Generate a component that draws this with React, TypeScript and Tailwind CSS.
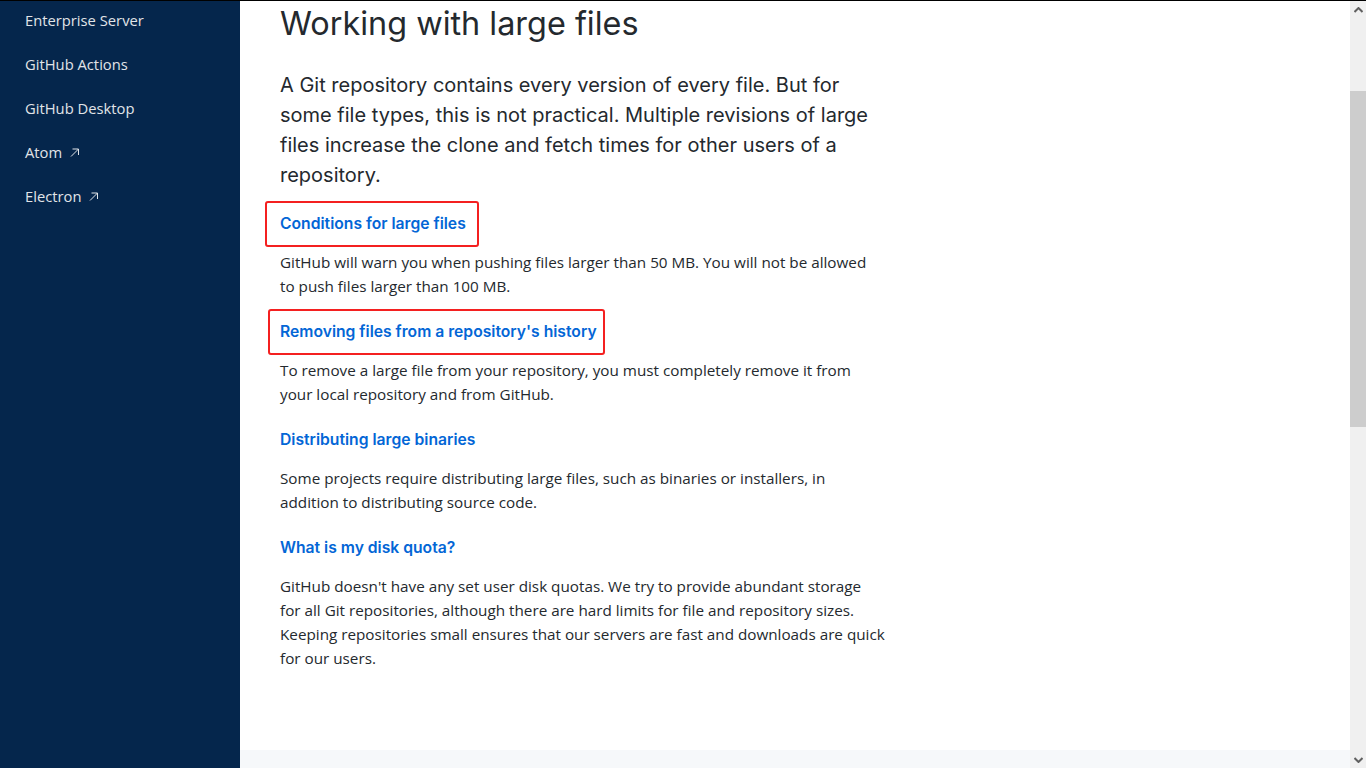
const navItems = [
  { label: "Enterprise Server", external: false },
  { label: "GitHub Actions", external: false },
  { label: "GitHub Desktop", external: false },
  { label: "Atom", external: true },
  { label: "Electron", external: true },
];

const sections = [
  {
    title: "Conditions for large files",
    lines: [
      "GitHub will warn you when pushing files larger than 50 MB. You will not be allowed",
      "to push files larger than 100 MB.",
    ],
    box: "-left-[15px] -right-[13px]",
  },
  {
    title: "Removing files from a repository's history",
    lines: [
      "To remove a large file from your repository, you must completely remove it from",
      "your local repository and from GitHub.",
    ],
    box: "-left-[12px] -right-[8px]",
  },
  {
    title: "Distributing large binaries",
    lines: [
      "Some projects require distributing large files, such as binaries or installers, in",
      "addition to distributing source code.",
    ],
  },
  {
    title: "What is my disk quota?",
    lines: [
      "GitHub doesn't have any set user disk quotas. We try to provide abundant storage",
      "for all Git repositories, although there are hard limits for file and repository sizes.",
      "Keeping repositories small ensures that our servers are fast and downloads are quick",
      "for our users.",
    ],
  },
];

function ExternalArrow() {
  return (
    <svg width="11" height="11" viewBox="0 0 11 11" fill="none" className="ml-[7px] mt-[1px]">
      <path d="M2 9.5 L9.5 2 M3.5 2 H9.5 V8" stroke="currentColor" strokeWidth="1" />
    </svg>
  );
}

function ScrollArrow({ up }: { up?: boolean }) {
  return (
    <div className="flex h-[17px] items-center justify-center">
      <svg width="9" height="6" viewBox="0 0 9 6" className={up ? "" : "rotate-180"}>
        <path d="M0.5 5 L4.5 1 L8.5 5" stroke="#606060" strokeWidth="2" fill="none" />
      </svg>
    </div>
  );
}

function Section({ title, lines, box }: { title: string; lines: string[]; box?: string }) {
  return (
    <div>
      <h2 className="mb-[14px] font-['Inter',sans-serif] text-[15.7px] font-semibold leading-[24px] text-[#0366d6]">
        <span className="relative inline-block">
          {title}
          {box && (
            <span
              className={`pointer-events-none absolute -top-[11px] -bottom-[11px] rounded-[3px] border-2 border-[#f42020] ${box}`}
            />
          )}
        </span>
      </h2>
      <p className="mb-[22px] whitespace-nowrap text-[15.25px] leading-[24px] text-[#24292e]">
        {lines.map((line, i) => (
          <span key={i} className="block">
            {line}
          </span>
        ))}
      </p>
    </div>
  );
}

export default function App() {
  return (
    <div className="flex h-screen flex-col overflow-hidden border-t border-black bg-white font-['Open_Sans','Noto_Sans',sans-serif]">
      <div className="flex min-h-0 flex-1">
        <aside className="w-[240px] shrink-0 bg-[#05264c] pl-[25px] text-[14.75px] text-[#e1e4e8]">
          <ul className="-mt-[3px]">
            {navItems.map((item) => (
              <li key={item.label} className="flex h-[44px] items-center">
                {item.label}
                {item.external && <ExternalArrow />}
              </li>
            ))}
          </ul>
        </aside>

        <main className="flex min-w-0 flex-1 flex-col">
          <div className="flex-1 pl-[40px] pt-[3px]">
            <h1 className="mb-[26px] font-['Inter',sans-serif] text-[32.4px] font-normal leading-[40px] text-[#24292e]">
              Working with large files
            </h1>
            <p className="mb-[22px] max-w-[600px] font-['Inter',sans-serif] text-[20px] leading-[30px] text-[#24292e]">
              A Git repository contains every version of every file. But for some file types, this is not
              practical. Multiple revisions of large files increase the clone and fetch times for other users
              of a repository.
            </p>
            {sections.map((s) => (
              <Section key={s.title} title={s.title} lines={s.lines} box={s.box} />
            ))}
          </div>
          <footer className="h-[18px] shrink-0 bg-[#f6f8fa]" />
        </main>

        <div className="flex w-[16px] shrink-0 flex-col bg-[#f0f0f0]">
          <ScrollArrow up />
          <div className="mt-[73px] h-[336px] bg-[#cdcdcd]" />
          <div className="flex-1" />
          <ScrollArrow />
        </div>
      </div>
    </div>
  );
}
